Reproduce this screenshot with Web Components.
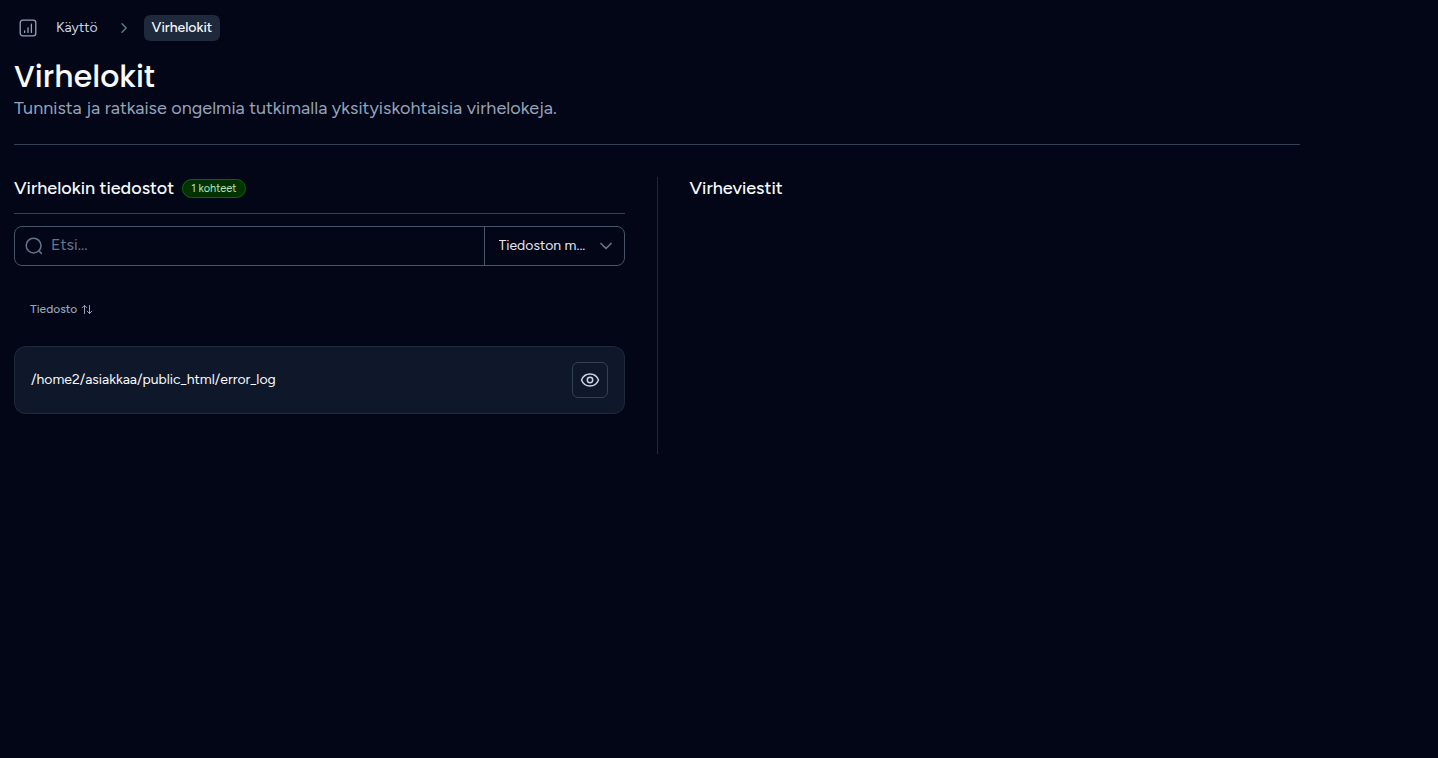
<!DOCTYPE html>
<html lang="fi">
<head>
<meta charset="utf-8">
<meta name="viewport" content="width=device-width, initial-scale=1">
<title>Virhelokit</title>
<style>
  :root {
    --bg: #020617;
    --card: #0f172a;
    --muted: #94a3b8;
    --dim: #64748b;
    --line: #334155;
    --line-soft: #1e293b;
    --line-strong: #475569;
    --text: #f8fafc;
  }

  body {
    margin: 0;
    background: var(--bg);
    color: var(--text);
    font-family: Figtree, Lato, sans-serif;
    font-size: 14px;
    line-height: 20px;
  }
</style>
</head>
<body>
<app-page>
  <bread-crumbs slot="crumbs" parent="Käyttö" current="Virhelokit"></bread-crumbs>
  <page-header heading="Virhelokit">Tunnista ja ratkaise ongelmia tutkimalla yksityiskohtaisia virhelokeja.</page-header>
  <split-view>
    <panel-section heading="Virhelokin tiedostot" lined>
      <count-badge slot="badge">1 kohteet</count-badge>
      <search-bar placeholder="Etsi..." filter="Tiedoston m..."></search-bar>
      <file-table column="Tiedosto" path="/home2/asiakkaa/public_html/error_log"></file-table>
    </panel-section>
    <panel-section slot="end" heading="Virheviestit"></panel-section>
  </split-view>
</app-page>

<script>
class BaseElement extends HTMLElement {
  connectedCallback() {
    if (this.shadowRoot) {
      return;
    }

    const template = document.createElement('template');
    template.innerHTML = this.render();
    this.attachShadow({ mode: 'open' }).append(template.content.cloneNode(true));
  }
}

class AppPage extends BaseElement {
  render() {
    return `
      <style>
        :host {
          display: block;
          box-sizing: border-box;
          max-width: 1314px;
          padding: 15px 14px;
        }
      </style>
      <slot name="crumbs"></slot>
      <main><slot></slot></main>
    `;
  }
}

class BreadCrumbs extends BaseElement {
  render() {
    return `
      <style>
        :host { display: block; }

        nav {
          display: flex;
          align-items: center;
          gap: 12px;
        }

        a {
          padding: 3px 8px;
          border-radius: 6px;
          color: #cbd5e1;
          text-decoration: none;
        }

        a.home {
          display: flex;
          padding: 3px 4px;
          margin-right: -6px;
          color: var(--muted);
        }

        a[aria-current] {
          background: var(--line-soft);
          color: var(--text);
          font-weight: 500;
        }

        svg { display: block; }
      </style>
      <nav aria-label="Murupolku">
        <a class="home" href="#" aria-label="Etusivu">
          <svg width="20" height="20" viewBox="0 0 20 20" fill="none" stroke="currentColor" stroke-width="1.3" stroke-linecap="round" stroke-linejoin="round">
            <rect x="2.2" y="2.2" width="15.6" height="15.6" rx="2.6"/>
            <path d="M6.6 12.8v1.6M10 9.8v4.6M13.4 6.2v8.2"/>
          </svg>
        </a>
        <a href="#">${this.getAttribute('parent')}</a>
        <svg width="14" height="14" viewBox="0 0 14 14" fill="none" stroke="#64748b" stroke-width="1.5" stroke-linecap="round" stroke-linejoin="round">
          <path d="M4 2.800 8.200 7 4 11.200"/>
        </svg>
        <a href="#" aria-current="page">${this.getAttribute('current')}</a>
      </nav>
    `;
  }
}

class PageHeader extends BaseElement {
  render() {
    return `
      <style>
        :host {
          display: block;
          margin: 18px 0 32px;
          padding-bottom: 22px;
          border-bottom: 1px solid var(--line);
        }

        h1 {
          margin: 0;
          font-family: Poppins, Inter, sans-serif;
          font-size: 30px;
          font-weight: 500;
          line-height: 36px;
        }

        p {
          margin: 0;
          color: var(--muted);
          font-size: 18px;
          line-height: 27px;
        }
      </style>
      <h1>${this.getAttribute('heading')}</h1>
      <p><slot></slot></p>
    `;
  }
}

class SplitView extends BaseElement {
  render() {
    return `
      <style>
        :host {
          display: grid;
          grid-template-columns: minmax(0, 1fr) 1px minmax(0, 1fr);
          gap: 32px;
        }

        .divider { background: var(--line-soft); }
      </style>
      <slot></slot>
      <div class="divider"></div>
      <slot name="end"></slot>
    `;
  }
}

class PanelSection extends BaseElement {
  render() {
    return `
      <style>
        :host { display: block; }

        header {
          display: flex;
          align-items: center;
          gap: 8px;
          padding-bottom: 14px;
        }

        :host([lined]) header {
          margin-bottom: 12px;
          border-bottom: 1px solid var(--line);
        }

        h2 {
          margin: 0;
          font-size: 18px;
          font-weight: 500;
          line-height: 22px;
        }
      </style>
      <section>
        <header>
          <h2>${this.getAttribute('heading')}</h2>
          <slot name="badge"></slot>
        </header>
        <slot></slot>
      </section>
    `;
  }
}

class CountBadge extends BaseElement {
  render() {
    return `
      <style>
        :host {
          display: block;
          padding: 0 8px;
          border: 1px solid #046c04;
          border-radius: 10px;
          background: #023202;
          color: #bbe5bb;
          font-size: 11px;
          line-height: 17px;
        }
      </style>
      <slot></slot>
    `;
  }
}

class SearchBar extends BaseElement {
  render() {
    return `
      <style>
        :host {
          display: flex;
          box-sizing: border-box;
          height: 40px;
          border: 1px solid var(--line-strong);
          border-radius: 8px;
        }

        .search {
          display: flex;
          flex: 1;
          align-items: center;
          gap: 8px;
          min-width: 0;
          padding-left: 8px;
        }

        .search svg { flex: none; }

        input, select {
          border: 0;
          outline: 0;
          background: transparent;
          font: inherit;
        }

        input {
          flex: 1;
          min-width: 0;
          padding: 0 0 2px;
          color: var(--text);
          font-size: 16px;
          line-height: 24px;
        }

        input::placeholder { color: var(--dim); opacity: 1; }

        .filter {
          display: grid;
          align-items: center;
          width: 140px;
          box-sizing: border-box;
          border-left: 1px solid var(--line-strong);
        }

        .filter > * { grid-area: 1 / 1; }

        .filter svg {
          justify-self: end;
          margin-right: 12px;
          pointer-events: none;
        }

        select {
          appearance: none;
          width: 100%;
          height: 100%;
          padding: 0 32px 0 14px;
          color: #e2e8f0;
          text-overflow: ellipsis;
        }
      </style>
      <label class="search">
        <svg width="20" height="20" viewBox="0 0 20 20" fill="none" stroke="#64748b" stroke-width="1.5" stroke-linecap="round" aria-hidden="true">
          <circle cx="10.600" cy="9.600" r="7.400"/>
          <path d="m15.800 14.800 2.600 2.600"/>
        </svg>
        <input type="search" placeholder="${this.getAttribute('placeholder')}" aria-label="Etsi">
      </label>
      <div class="filter">
        <select aria-label="Rajaus">
          <option>${this.getAttribute('filter')}</option>
        </select>
        <svg width="12" height="12" viewBox="0 0 12 12" fill="none" stroke="#64748b" stroke-width="1.7" stroke-linecap="round" stroke-linejoin="round" aria-hidden="true">
          <path d="M1 3.500 6 8.500l5-5"/>
        </svg>
      </div>
    `;
  }
}

class FileTable extends BaseElement {
  render() {
    return `
      <style>
        :host {
          display: block;
          padding: 20px 0 40px;
        }

        table {
          width: 100%;
          border-collapse: separate;
          border-spacing: 0;
        }

        th {
          height: 60px;
          box-sizing: border-box;
          padding: 13px 16px 0;
          text-align: left;
          vertical-align: top;
        }

        th button {
          display: flex;
          align-items: center;
          gap: 4px;
          padding: 0;
          border: 0;
          background: none;
          color: var(--muted);
          font: inherit;
          font-size: 12px;
          font-weight: 500;
        }

        td {
          padding: 15px 16px;
          border: 1px solid var(--line-soft);
          border-width: 1px 0;
          background: var(--card);
        }

        td:first-child {
          border-left-width: 1px;
          border-radius: 12px 0 0 12px;
        }

        td:last-child {
          width: 36px;
          border-right-width: 1px;
          border-radius: 0 12px 12px 0;
        }

        td button {
          display: grid;
          place-items: center;
          box-sizing: border-box;
          width: 36px;
          height: 36px;
          padding: 0;
          border: 1px solid var(--line);
          border-radius: 6px;
          background: transparent;
          color: #cbd5e1;
        }

        svg { display: block; }
      </style>
      <table>
        <thead>
          <tr>
            <th colspan="2">
              <button type="button">
                ${this.getAttribute('column')}
                <svg width="12" height="12" viewBox="0 0 12 12" fill="none" stroke="currentColor" stroke-linecap="round" stroke-linejoin="round" aria-hidden="true">
                  <path d="M3.500 10.500v-8M1.200 4.700l2.300-2.300 2.300 2.300M8.500 2.500v8M6.200 8.200l2.300 2.300 2.300-2.300"/>
                </svg>
              </button>
            </th>
          </tr>
        </thead>
        <tbody>
          <tr>
            <td>${this.getAttribute('path')}</td>
            <td>
              <button type="button" aria-label="Näytä">
                <svg width="20" height="20" viewBox="0 0 20 20" fill="none" stroke="currentColor" stroke-width="1.500" stroke-linecap="round" stroke-linejoin="round">
                  <path d="M1.500 10C3 6.300 6.200 4 10 4s7 2.300 8.500 6c-1.500 3.700-4.700 6-8.500 6s-7-2.300-8.500-6Z"/>
                  <circle cx="10" cy="10" r="2.700"/>
                </svg>
              </button>
            </td>
          </tr>
        </tbody>
      </table>
    `;
  }
}

customElements.define('app-page', AppPage);
customElements.define('bread-crumbs', BreadCrumbs);
customElements.define('page-header', PageHeader);
customElements.define('split-view', SplitView);
customElements.define('panel-section', PanelSection);
customElements.define('count-badge', CountBadge);
customElements.define('search-bar', SearchBar);
customElements.define('file-table', FileTable);
</script>
</body>
</html>
